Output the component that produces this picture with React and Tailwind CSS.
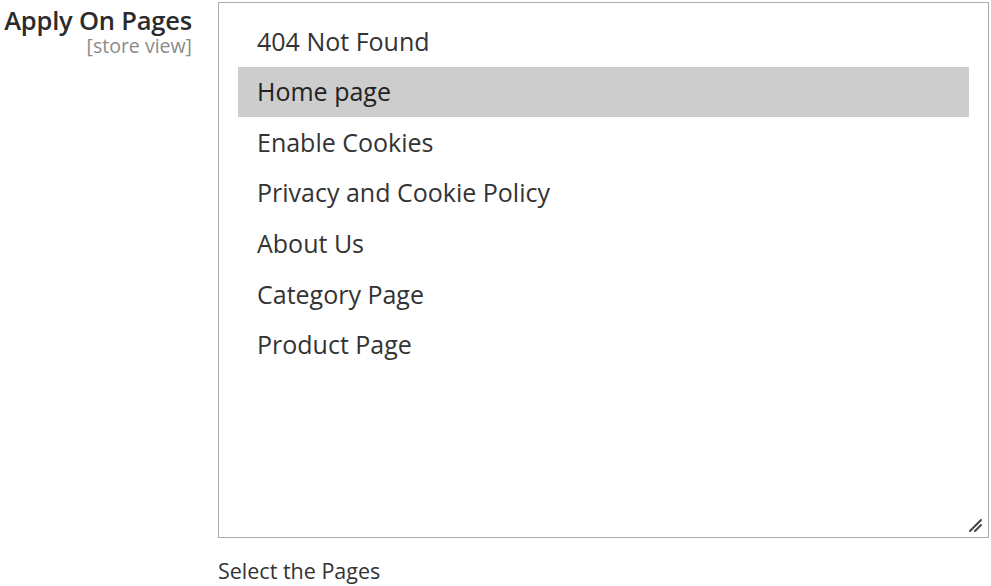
import React from "react";

const items = [
  "404 Not Found",
  "Home page",
  "Enable Cookies",
  "Privacy and Cookie Policy",
  "About Us",
  "Category Page",
  "Product Page",
];

export default function App() {
  return (
    <div
      className="w-[991px] h-[586px] bg-white overflow-hidden flex text-[#303030]"
      style={{ fontFamily: '"Open Sans", "Noto Sans", sans-serif' }}
    >
      <div className="w-[192px] shrink-0 flex flex-col items-end pt-[5px]">
        <div className="text-[25.5px] font-semibold leading-[30px] tracking-[-0.2px] text-[#2b2b2b]">Apply On Pages</div>
        <div className="text-[19.5px] leading-[22px] text-[#8a8a8a]">[store view]</div>
      </div>
      <div className="ml-[26px] pt-[2px] flex flex-col">
        <div className="relative w-[771px] h-[536px] border border-[#adadad] pt-[13px] px-[19px]">
          {items.map((t, i) => (
            <div
              key={t}
              className={
                "h-[50.6px] flex items-center pl-[19px] text-[25px] " +
                (i === 1 ? "bg-[#cdcdcd] text-[#222]" : "text-[#333]")
              }
            >
              {t}
            </div>
          ))}
          <svg
            className="absolute right-[5px] bottom-[4px]"
            width="15"
            height="15"
            viewBox="0 0 15 15"
          >
            <line x1="2" y1="13" x2="13" y2="2" stroke="#444" strokeWidth="2" strokeLinecap="round" />
            <line x1="7" y1="13" x2="13" y2="7" stroke="#444" strokeWidth="2" strokeLinecap="round" />
          </svg>
        </div>
        <div className="mt-[19px] text-[21.5px] leading-[28px] text-[#333]">Select the Pages</div>
      </div>
    </div>
  );
}
